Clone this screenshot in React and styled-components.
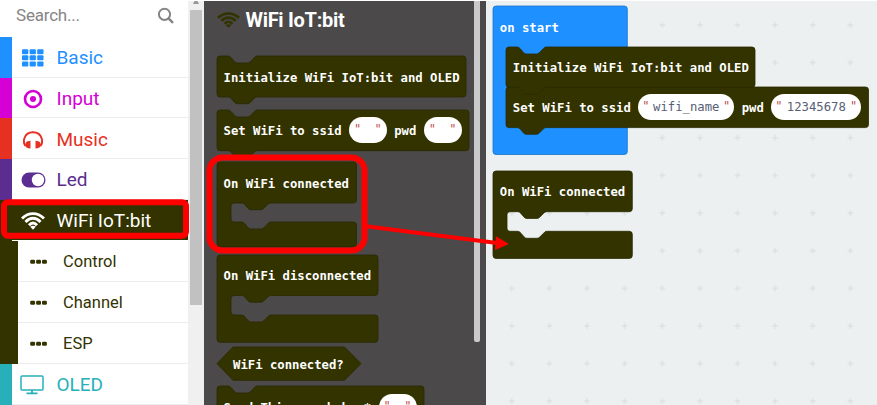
import React from "react";
import styled, { createGlobalStyle } from "styled-components";

const OLIVE = "#333300";
const BLUE = "#1e90ff";

const GlobalStyle = createGlobalStyle`
  * { box-sizing: border-box; }
  body { margin: 0; background: #fff; overflow: hidden; }
`;

const Editor = styled.div`
  position: relative;
  display: flex;
  width: 877px;
  height: 405px;
  overflow: hidden;
  background: #fff;
  font-family: Roboto, sans-serif;
`;

const Toolbox = styled.nav`
  width: 188px;
  flex: none;
  display: flex;
  flex-direction: column;
`;

const SearchBar = styled.div`
  display: flex;
  flex: none;
  align-items: center;
  justify-content: space-between;
  height: 36.6px;
  padding: 0 14px 6.3px 16px;
  color: #858585;
  font-size: 17px;
  letter-spacing: -0.2px;
`;

const Row = styled.div`
  display: flex;
  flex: none;
  align-items: center;
  height: 40.95px;
  padding-top: 1.2px;
  color: ${(p) => p.$color};
  background: linear-gradient(to right, ${(p) => p.$strip} ${(p) => (p.$sub ? 18 : 12)}px, ${(p) => (p.$active ? OLIVE : "#fff")} 0);
  position: relative;
  &::after {
    content: "";
    position: absolute;
    left: ${(p) => (p.$sub ? 18 : 12)}px;
    right: 0;
    bottom: 0;
    height: 1px;
    background: ${(p) => (p.$active ? "#fff" : "#ececec")};
  }
`;

const IconSlot = styled.span`
  display: flex;
  justify-content: center;
  width: ${(p) => (p.$sub ? 19 : 26)}px;
  margin-left: ${(p) => (p.$sub ? 29 : 20)}px;
  margin-right: ${(p) => (p.$sub ? 15 : 10.5)}px;
`;

const RowLabel = styled.span`
  font-size: ${(p) => (p.$sub ? 16.5 : 19)}px;
  line-height: 24px;
  white-space: nowrap;
`;

const ScrollTrack = styled.div`
  display: flex;
  flex: none;
  flex-direction: column;
  align-items: center;
  width: 16px;
  margin-top: 1px;
  background: #f0f0f0;
`;

const ScrollArrow = styled.div`
  height: 9px;
  display: flex;
  align-items: flex-start;
`;

const ScrollThumb = styled.div`
  width: 12px;
  height: 295px;
  background: #c1c1c1;
`;

const Flyout = styled.section`
  display: flex;
  flex: none;
  justify-content: space-between;
  width: 282px;
  height: 404px;
  margin-top: 1px;
  padding: 0 6px 0 13px;
  background: #4b4949;
`;

const FlyoutList = styled.div`
  display: flex;
  flex-direction: column;
  align-items: flex-start;
`;

const FlyoutHeader = styled.h2`
  display: flex;
  flex: none;
  align-items: center;
  gap: 5.5px;
  height: 38px;
  margin: 0 0 17px;
  color: #fff;
  font-size: 20px;
  font-weight: 700;
  letter-spacing: -0.3px;
  white-space: nowrap;
`;

const FlyoutScroll = styled.div`
  width: 6px;
  height: 341px;
  border-radius: 0 0 2px 2px;
  background: #cbcaca;
`;

const BlockBox = styled.div`
  position: relative;
  flex: none;
  width: ${(p) => p.$w}px;
  height: ${(p) => p.$h}px;
  margin-bottom: ${(p) => p.$gap || 0}px;
`;

const Outline = styled.svg`
  position: absolute;
  left: 0;
  top: 0;
  overflow: visible;
`;

const BlockLine = styled.div`
  position: relative;
  display: flex;
  align-items: center;
  height: ${(p) => p.$h || 41}px;
  padding: ${(p) => p.$top ?? 3}px 0 0 ${(p) => p.$pad || 6.5}px;
  color: #fff;
  font: bold 12.25px/16px "DejaVu Sans Mono", monospace;
  white-space: pre;
`;

const Pill = styled.span`
  display: flex;
  align-items: center;
  justify-content: space-between;
  width: ${(p) => p.$w}px;
  height: 26px;
  margin: -2px 7.5px 0;
  padding: 0 ${(p) => (p.$empty ? 5 : 4)}px;
  border-radius: 13px;
  background: #fff;
  color: #575e75;
  font-weight: 400;
`;

const Quote = styled.span`
  color: #c4504f;
  font-size: 12px;
  line-height: 16px;
  margin-top: -2px;
`;

const Workspace = styled.main`
  position: relative;
  flex: none;
  width: 391px;
  height: 404px;
  margin-top: 1px;
  overflow: hidden;
  background: #ecf0f1;
`;

const Placed = styled.div`
  position: absolute;
  left: ${(p) => p.$x}px;
  top: ${(p) => p.$y}px;
`;

const Annotations = styled.svg`
  position: absolute;
  inset: 0;
  pointer-events: none;
`;

const notch = (x = 0) =>
  `H${x + 11} Q${x + 13} 0 ${x + 14.5} 2 l3 3.5 q1.2 1.5 3 1.5 h10 q1.5 0 2.8 -1.3 l4 -4 Q${x + 38.5} 0 ${x + 40} 0`;

const tabBack = (x, y) =>
  `H${x + 40} q-1.5 0 -2.8 1.5 l-4 4 q-1.2 1.2 -2.8 1.2 h-10 q-1.8 0 -3 -1.5 l-3 -3.5 q-1.2 -1.7 -3 -1.7`;

const statementPath = (w, h) =>
  `M0 3 Q0 0 3 0 ${notch()} H${w - 3} Q${w} 0 ${w} 3 V${h - 3} Q${w} ${h} ${w - 3} ${h} ${tabBack(0, h)} H3 Q0 ${h} 0 ${h - 3} Z`;

const wrapPath = (w, top, gap, h) => {
  const y = top + gap;
  return `M0 3 Q0 0 3 0 H${w - 3} Q${w} 0 ${w} 3 V${top - 3} Q${w} ${top} ${w - 3} ${top} ${tabBack(13.5, top)} H17 Q14 ${top} 14 ${top + 3} V${y - 3} Q14 ${y} 17 ${y} H24.5 q2 0 3.5 2 l3 3.5 q1.2 1.5 3 1.5 h10 q1.5 0 2.8 -1.3 l4 -4 q1.2 -1.7 2.7 -1.7 H${w - 3} Q${w} ${y} ${w} ${y + 3} V${h - 3} Q${w} ${h} ${w - 3} ${h} H3 Q0 ${h} 0 ${h - 3} Z`;
};

function Block({ w, h, gap, path, fill = OLIVE, lineHeight, pad, top, children }) {
  return (
    <BlockBox $w={w} $h={h} $gap={gap}>
      <Outline width={w} height={h}>
        <path d={path} fill={fill} stroke={fill === OLIVE ? "#292900" : "#1873cc"} strokeWidth="0.8" />
      </Outline>
      <BlockLine $h={lineHeight} $pad={pad} $top={top}>{children}</BlockLine>
    </BlockBox>
  );
}

const TextField = ({ w, value }) => (
  <Pill $w={w} $empty={!value}>
    <Quote>"</Quote>
    {value}
    <Quote>"</Quote>
  </Pill>
);

const WifiIcon = ({ width = 24, height = 18, color = "currentColor" }) => (
  <svg width={width} height={height} viewBox="0 0 24 18" preserveAspectRatio="none">
    <g fill="none" stroke={color} strokeWidth="2.9">
      <path d="M1 6.5Q6 1.6 12 1.6T23 6.5" />
      <path d="M4.5 10Q8 6.3 12 6.3T19.5 10" />
      <path d="M8 13.3Q10 11 12 11T16 13.3" />
    </g>
    <path d="M9.2 14.8Q12 12.6 14.8 14.8L12 17.8Z" fill={color} />
  </svg>
);

const GridIcon = () => (
  <svg width="22" height="18" fill="currentColor">
    {[0, 1, 2].map((r) =>
      [0, 1, 2].map((c) => <rect key={`${r}${c}`} x={c * 7.6} y={r * 6.1 + 0.2} width="6.3" height="5" rx="1" />)
    )}
  </svg>
);

const TargetIcon = () => (
  <svg width="20" height="20">
    <circle cx="10" cy="10" r="8" fill="none" stroke="currentColor" strokeWidth="2.6" />
    <circle cx="10" cy="10" r="3" fill="currentColor" />
  </svg>
);

const HeadphonesIcon = () => (
  <svg width="20" height="18" viewBox="0 0 20 18">
    <path d="M2.5 15C.5 12 .8 9 1.2 7.8 2.3 3.8 5.8 1.2 10 1.2s7.7 2.6 8.8 6.6c.4 1.2.7 4.2-1.3 7.2" fill="none" stroke="currentColor" strokeWidth="2" />
    <path d="M3 11.2Q4 9.7 7.5 9.7V17.5Q3.2 17.5 2 14.5ZM17 11.2Q16 9.7 12.5 9.7V17.5Q16.8 17.5 18 14.5Z" fill="currentColor" />
  </svg>
);

const ToggleIcon = () => (
  <svg width="25" height="16">
    <rect x="0.5" y="0.5" width="24" height="15" rx="7.5" fill="currentColor" />
    <circle cx="17" cy="8" r="6.2" fill="#fff" />
  </svg>
);

const DotsIcon = () => (
  <svg width="19" height="6" fill="currentColor">
    {[1.2, 7.1, 13].map((x) => <rect key={x} x={x} y="0.8" width="4.9" height="4" rx="1.3" />)}
  </svg>
);

const MonitorIcon = () => (
  <svg width="26" height="20" fill="none" stroke="currentColor">
    <rect x="1" y="1" width="22" height="14" rx="1" strokeWidth="1.5" />
    <path d="M12 15V18M6.5 18.3H17.5" strokeWidth="1.8" />
  </svg>
);

const SearchIcon = () => (
  <svg width="17" height="17" fill="none" stroke="currentColor">
    <circle cx="7.5" cy="7.3" r="5.6" strokeWidth="2" />
    <path d="M11.5 11.3L16 15.8" strokeWidth="2.4" />
  </svg>
);

const categories = [
  { label: "Basic", color: BLUE, icon: GridIcon },
  { label: "Input", color: "#d400d4", icon: TargetIcon },
  { label: "Music", color: "#e63022", icon: HeadphonesIcon },
  { label: "Led", color: "#5c2d91", icon: ToggleIcon },
  { label: "WiFi IoT:bit", color: "#fff", strip: OLIVE, icon: WifiIcon, active: true },
  { label: "Control", color: OLIVE, icon: DotsIcon, sub: true },
  { label: "Channel", color: OLIVE, icon: DotsIcon, sub: true },
  { label: "ESP", color: OLIVE, icon: DotsIcon, sub: true },
  { label: "OLED", color: "#27b0ba", icon: MonitorIcon },
];

function GridMarks() {
  return (
    <Outline width="391" height="404">
      <defs>
        <pattern id="grid" x="7" y="5.2" width="37.62" height="37.62" patternUnits="userSpaceOnUse">
          <path d="M15.8 18.8h6M18.8 15.8v6" stroke="#d5d9da" strokeWidth="0.9" />
        </pattern>
      </defs>
      <rect width="391" height="404" fill="url(#grid)" />
    </Outline>
  );
}

export default function App() {
  return (
    <Editor>
      <GlobalStyle />
      <Toolbox>
        <SearchBar>
          <span>Search...</span>
          <SearchIcon />
        </SearchBar>
        {categories.map(({ label, color, strip, icon: Icon, sub, active }) => (
          <Row key={label} $color={color} $strip={strip || color} $sub={sub} $active={active}>
            <IconSlot $sub={sub}><Icon /></IconSlot>
            <RowLabel $sub={sub}>{label}</RowLabel>
          </Row>
        ))}
      </Toolbox>
      <ScrollTrack>
        <ScrollArrow>
          <svg width="8" height="4"><path d="M1 3L2.5 0h3L7 3Z" fill="#999" /></svg>
        </ScrollArrow>
        <ScrollThumb />
      </ScrollTrack>
      <Flyout>
        <FlyoutList>
          <FlyoutHeader>
            <WifiIcon width={23} height={16} color={OLIVE} />
            WiFi IoT:bit
          </FlyoutHeader>
          <Block w={249} h={41} gap={13} path={statementPath(249, 41)}>Initialize WiFi IoT:bit and OLED</Block>
          <Block w={252} h={40.7} gap={11.3} path={statementPath(252, 40.7)} top={1}>
            Set WiFi to ssid<TextField w={38} />pwd<TextField w={38} />
          </Block>
          <Block w={139.5} h={85} gap={8} path={wrapPath(139.5, 41, 19, 85)}>On WiFi connected</Block>
          <Block w={161} h={87.3} gap={5} path={wrapPath(161, 40.5, 19.5, 87.3)} top={1}>On WiFi disconnected</Block>
          <Block w={144} h={33.3} gap={5.4} lineHeight={33.3} pad={16} top={1.5} path="M0 16.6L16 0H127.5L144 16.6L127.5 33.3H16Z">
            WiFi connected?
          </Block>
          <Block w={207} h={41} path={statementPath(207, 41)}>
            Send Thingspeak key*<TextField w={38} />
          </Block>
        </FlyoutList>
        <FlyoutScroll />
      </Flyout>
      <Workspace>
        <GridMarks />
        <Placed $x={7.3} $y={4.5}>
          <Block w={134.3} h={148.5} fill={BLUE} path="M0 3Q0 0 3 0H131.3Q134.3 0 134.3 3V145.5Q134.3 148.5 131.3 148.5H3Q0 148.5 0 145.5Z">
            on start
          </Block>
        </Placed>
        <Placed $x={20.3} $y={85.6}>
          <Block w={362.5} h={40.6} path={statementPath(362.5, 40.6)} top={1}>
            Set WiFi to ssid<TextField w={97} value="wifi_name" />pwd<TextField w={91} value="12345678" />
          </Block>
        </Placed>
        <Placed $x={20.3} $y={45.6}>
          <Block w={249} h={40.4} path={statementPath(249, 40.4)} top={1}>Initialize WiFi IoT:bit and OLED</Block>
        </Placed>
        <Placed $x={7.3} $y={169.5}>
          <Block w={139.3} h={87.4} path={wrapPath(139.3, 40.7, 19.6, 87.4)} top={1}>On WiFi connected</Block>
        </Placed>
      </Workspace>
      <Annotations width="877" height="405">
        <rect x="4" y="202.3" width="182" height="33.5" rx="4" fill="none" stroke="#f00" strokeWidth="6" />
        <rect x="209.5" y="157.5" width="155" height="93" rx="13" fill="none" stroke="#f00" strokeWidth="6" />
        <path d="M366 226.3L497 243" stroke="#f00" strokeWidth="4" />
        <path d="M496 236.3L509 244L495 250Z" fill="#f00" />
      </Annotations>
    </Editor>
  );
}
